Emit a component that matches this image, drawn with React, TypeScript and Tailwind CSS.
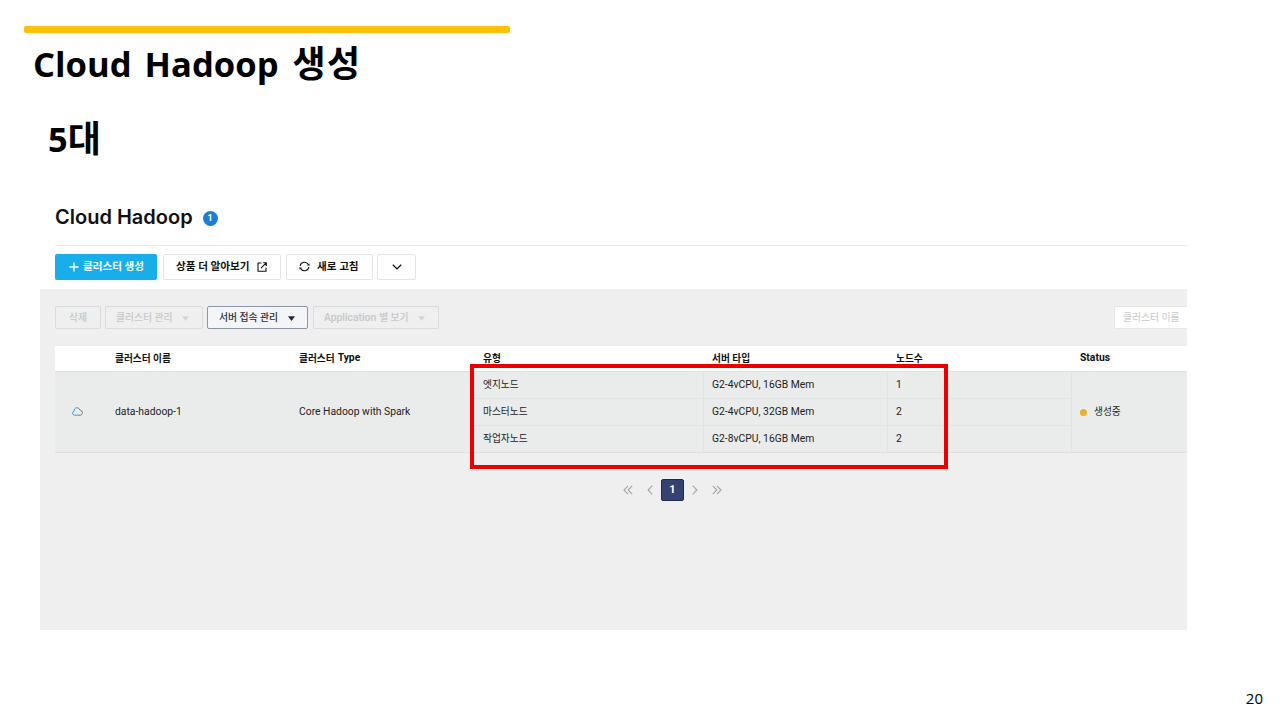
import React from 'react';

const columns = [
  { label: '클러스터 이름', width: 'w-[184px]' },
  { label: '클러스터', suffix: 'Type', width: 'w-[184px]' },
  { label: '유형', width: 'w-[229px]' },
  { label: '서버 타입', width: 'w-[184px]' },
  { label: '노드수', width: 'w-[184px]' },
  { suffix: 'Status', width: 'w-[116px]' },
];

const nodes = [
  { type: '엣지노드', server: 'G2-4vCPU, 16GB Mem', count: 1 },
  { type: '마스터노드', server: 'G2-4vCPU, 32GB Mem', count: 2 },
  { type: '작업자노드', server: 'G2-8vCPU, 16GB Mem', count: 2 },
];

const Caret = ({ className }: { className: string }) => (
  <svg width="7" height="5" viewBox="0 0 7 5" className={className}>
    <path d="M0 0.3h7L3.5 5z" fill="currentColor" />
  </svg>
);

const Chevrons = ({ double = false, flip = false }: { double?: boolean; flip?: boolean }) => (
  <svg
    width="10"
    height="10"
    viewBox="0 0 10 10"
    fill="none"
    stroke="#a3a3a3"
    strokeWidth="1.1"
    className={flip ? '-scale-x-100' : ''}
  >
    {double ? <path d="M5 0.8L1 5l4 4.2M9.2 0.8L5.2 5l4 4.2" /> : <path d="M7.3 0.6L3.1 5l4.2 4.4" />}
  </svg>
);

const Toolbar = () => (
  <div className="flex h-[26px] mt-2 text-[10.6px] font-bold text-[#111]">
    <button className="w-[102px] flex items-center pl-[14px] gap-[4px] bg-[#17aeea] text-white rounded-[2px]">
      <svg width="10" height="10" viewBox="0 0 10 10" stroke="currentColor" strokeWidth="1.3">
        <path d="M5 0.5v9M0.5 5h9" />
      </svg>
      <span>클러스터 생성</span>
    </button>
    <button className="w-[118px] ml-[6px] flex items-center pl-[12px] gap-[7px] bg-white border border-[#e4e4e4] rounded-[2px]">
      <span>상품 더 알아보기</span>
      <svg width="10" height="10" viewBox="0 0 10 10" fill="none" stroke="currentColor" strokeWidth="1.1">
        <path d="M4.5 1H1v8.2h8V5.8M6.2 0.8H9.3V3.9M9.2 0.9L4 6.1" />
      </svg>
    </button>
    <button className="w-[87px] ml-[5px] flex items-center pl-[12px] gap-[7px] bg-white border border-[#e4e4e4] rounded-[2px]">
      <svg width="11" height="11" viewBox="0 0 11 11" fill="none" stroke="currentColor" strokeWidth="1.1" className="-mt-px">
        <path d="M1.2 4.9A4.3 4.3 0 0 1 9.3 3.6M9.8 6.1A4.3 4.3 0 0 1 1.7 7.4" />
        <path d="M8 4.5H10.8L10.2 2.2zM3 6.5H0.2L0.8 8.8z" fill="currentColor" stroke="none" />
      </svg>
      <span>새로 고침</span>
    </button>
    <button className="w-[39px] ml-[4px] flex items-center justify-center bg-white border border-[#e4e4e4] rounded-[2px]">
      <svg width="10" height="6" viewBox="0 0 10 6" fill="none" stroke="currentColor" strokeWidth="1.3">
        <path d="M0.8 0.7L5 4.9l4.2-4.2" />
      </svg>
    </button>
  </div>
);

const Filters = () => (
  <div className="flex h-[23px] text-[9.8px] font-medium text-[#c6c8ca]">
    <button className="w-[46px] flex items-center justify-center pt-px border border-[#d9dbdd] rounded-[2px]">삭제</button>
    <button className="w-[98px] ml-[4px] flex items-center pl-[10px] pt-px border border-[#d9dbdd] rounded-[2px]">
      클러스터 관리
      <Caret className="ml-auto mr-[13px] text-[#d3d5d7]" />
    </button>
    <button className="w-[101px] ml-[4px] flex items-center pl-[11px] pt-px border border-[#8b94a8] bg-[#f4f5f6] text-[#27303f] rounded-[2px]">
      서버 접속 관리
      <Caret className="ml-auto mr-[12px] text-[#1d2a44]" />
    </button>
    <button className="w-[126px] ml-[5px] flex items-center pl-[10px] border border-[#d9dbdd] rounded-[2px]">
      <span className="text-[10.3px] mr-[3px]">Application</span>
      <span className="pt-px">별 보기</span>
      <Caret className="ml-auto mr-[13px] mt-px text-[#d3d5d7]" />
    </button>
    <div className="w-[73px] ml-auto flex items-center pl-[8px] pt-px bg-white border border-r-0 border-[#e6e6e6] rounded-l-[2px] font-normal whitespace-nowrap">
      클러스터 이름
    </div>
  </div>
);

const ClusterTable = () => (
  <div className="mt-[17px] text-[10.35px] text-[#222]">
    <div className="flex h-[25px] items-center bg-white pl-[51px] font-bold text-[#111]">
      {columns.map((column) => (
        <div key={column.width + column.label} className={`${column.width} h-full shrink-0 flex items-center gap-[3px] pl-[9px]`}>
          {column.label && <span className="pt-px text-[9.7px]">{column.label}</span>}
          {column.suffix && <span className="pb-px">{column.suffix}</span>}
        </div>
      ))}
    </div>
    <div className="flex h-[82px] bg-[#eaeceb] border-y border-[#dfe1e1]">
      <div className="w-[51px] flex items-center pl-[17px] pb-px">
        <svg width="11" height="9" viewBox="0 0 11 9" fill="none" strokeWidth="1">
          <path d="M5.5 8.2H2.4A2 2 0 0 1 2 4.3C2 2.3 3.2 0.8 4.8 0.8" stroke="#3b9fd6" />
          <path d="M4.8 0.8C6.4 0.7 7.5 1.7 7.9 3.2 9.3 3.2 10.4 4.3 10.4 5.7S9.4 8.2 8.1 8.2H5.5" stroke="#6c7a86" />
        </svg>
      </div>
      <div className="w-[184px] flex items-center pl-[9px] pb-px">data-hadoop-1</div>
      <div className="w-[184px] flex items-center pl-[9px] pb-px">Core Hadoop with Spark</div>
      <div className="w-[597px] flex flex-col divide-y divide-[#e1e4e4]">
        {nodes.map((node) => (
          <div key={node.type} className="flex flex-1 items-stretch divide-x divide-[#e1e4e4]">
            <div className="w-[230px] flex items-center pl-[9px] text-[9.7px]">{node.type}</div>
            <div className="w-[184px] flex items-center pl-[8px] pb-px">{node.server}</div>
            <div className="w-[183px] flex items-center pl-[8px] pb-px">{node.count}</div>
          </div>
        ))}
      </div>
      <div className="w-[116px] flex items-center pl-[8px] border-l border-[#dfe2e2]">
        <span className="w-[7px] h-[7px] rounded-full bg-[#e6b324]" />
        <span className="ml-[7px] text-[9.7px]">생성중</span>
      </div>
    </div>
  </div>
);

const Pagination = () => (
  <div className="flex items-center h-[22px] mt-[26px] ml-[568px]">
    <Chevrons double />
    <div className="ml-[12px]"><Chevrons /></div>
    <span className="w-[23px] h-[22px] ml-[6px] flex items-center justify-center bg-[#33426e] border border-[#1e2b52] rounded-[2px] text-white text-[11px] font-bold">
      1
    </span>
    <div className="ml-[6px]"><Chevrons flip /></div>
    <div className="ml-[12px]"><Chevrons double flip /></div>
  </div>
);

const App = () => {
  return (
    <div className="relative w-[1280px] h-[720px] overflow-hidden bg-white text-black font-['Roboto','Noto_Sans_CJK_KR',sans-serif]">
      <div className="w-[486px] h-[7px] ml-[24px] mt-[26px] rounded-[2px] bg-[#fdc00b]" />
      <div className="font-['Open_Sans','Noto_Sans_CJK_KR',sans-serif] font-bold">
        <h1 className="h-[60px] ml-[33px] mt-px flex items-center text-[34.6px] whitespace-pre">
          <span className="[word-spacing:4px]">Cloud Hadoop </span>
          <span className="ml-px text-[36px] tracking-[1.5px]">생성</span>
        </h1>
        <h2 className="h-[60px] ml-[48px] mt-[15px] flex items-center text-[34.4px]">
          <span>5</span>
          <span className="text-[36px]">대</span>
        </h2>
      </div>

      <section className="w-[1147px] ml-[40px] mt-[32px]">
        <div className="ml-[15px]">
          <div className="flex h-[45px] items-center gap-[10px] pb-[12px] border-b border-[#e8e8e8]">
            <h3 className="text-[20px] font-semibold font-['Inter',sans-serif] text-[#111]">Cloud Hadoop</h3>
            <span className="w-[15px] h-[15px] mt-[2px] flex items-center justify-center rounded-full bg-[#1c7fd6] text-white text-[9px] leading-none font-bold">
              1
            </span>
          </div>
          <Toolbar />
        </div>
        <div className="h-[341px] mt-[9px] pl-[15px] pt-[17px] bg-[#efefef]">
          <Filters />
          <ClusterTable />
          <Pagination />
        </div>
      </section>

      {/* highlight around the node rows */}
      <div className="absolute left-[470px] top-[364px] w-[478px] h-[105px] border-4 border-[#ea0000]" />
      <div className="absolute right-[17px] bottom-[11px] text-[15px] leading-[22px] font-['Open_Sans',sans-serif]">20</div>
    </div>
  );
};

export default App;
